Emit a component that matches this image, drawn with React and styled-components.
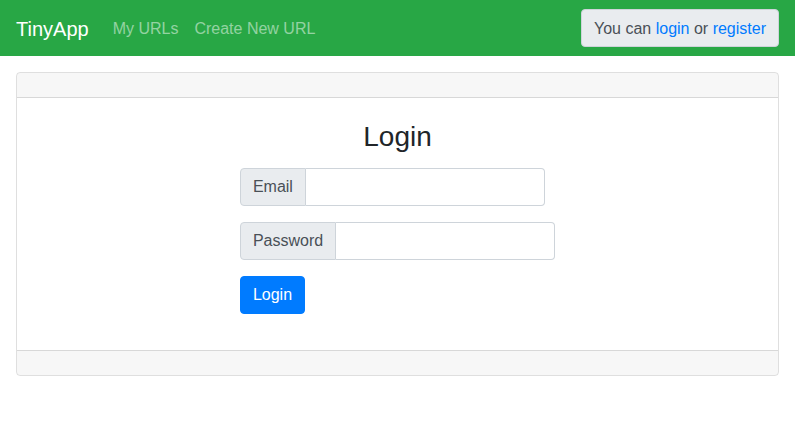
import styled, { createGlobalStyle } from "styled-components";
import React from "react";

const GlobalStyle = createGlobalStyle`
  * { box-sizing: border-box; }
  body {
    margin: 0;
    font-family: "Liberation Sans", Arial, sans-serif;
    font-size: 16px;
    line-height: 1.5;
    color: #212529;
    background: #fff;
  }
`;

const Navbar = styled.nav`
  height: 56px;
  background-color: #28a745;
  display: flex;
  align-items: center;
  justify-content: space-between;
  padding: 8px 16px;
`;

const NavLeft = styled.div`
  display: flex;
  align-items: center;
  padding-top: 2px;
`;

const Brand = styled.a`
  font-size: 20px;
  color: #fff;
  margin-right: 16px;
  text-decoration: none;
  line-height: 30px;
`;

const NavLink = styled.a`
  color: rgba(255, 255, 255, 0.5);
  padding: 8px;
  text-decoration: none;
`;

const UserBox = styled.div`
  background-color: #e9ecef;
  border: 1px solid #ced4da;
  border-radius: 4px;
  color: #495057;
  padding: 7px 12px 5px;
  height: 38px;
  line-height: 24px;
`;

const Link = styled.a`
  color: #007bff;
  text-decoration: none;
`;

const Main = styled.main`
  padding: 16px;
`;

const Card = styled.div`
  border: 1px solid rgba(0, 0, 0, 0.125);
  border-radius: 4px;
  overflow: hidden;
`;

const CardHeader = styled.div`
  height: 25px;
  background-color: rgba(0, 0, 0, 0.03);
  border-bottom: 1px solid rgba(0, 0, 0, 0.125);
`;

const CardFooter = styled.div`
  height: 25px;
  background-color: rgba(0, 0, 0, 0.03);
  border-top: 1px solid rgba(0, 0, 0, 0.125);
`;

const CardBody = styled.div`
  padding: 20px;
  text-align: center;
`;

const Title = styled.h3`
  font-size: 28px;
  font-weight: 500;
  line-height: 1.2;
  margin: 2px 0 14px;
`;

const Form = styled.form`
  display: inline-block;
  text-align: left;
`;

const FormGroup = styled.div`
  margin-bottom: 16px;
`;

const InputGroup = styled.div`
  display: flex;
  height: 38px;
`;

const Addon = styled.span`
  background-color: #e9ecef;
  border: 1px solid #ced4da;
  border-radius: 4px 0 0 4px;
  color: #495057;
  padding: 6px 12px;
  line-height: 24px;
`;

const Input = styled.input`
  width: ${(p) => p.$w}px;
  border: 1px solid #ced4da;
  border-left: none;
  border-radius: 0 4px 4px 0;
  font: inherit;
  padding: 6px 12px;
  outline: none;
`;

const Button = styled.button`
  background-color: #007bff;
  border: 1px solid #007bff;
  border-radius: 4px;
  color: #fff;
  font: inherit;
  line-height: 24px;
  padding: 6px 12px;
  height: 38px;
  cursor: pointer;
`;

export default function App() {
  return (
    <>
      <GlobalStyle />
      <Navbar>
        <NavLeft>
          <Brand href="#">TinyApp</Brand>
          <NavLink href="#">My URLs</NavLink>
          <NavLink href="#">Create New URL</NavLink>
        </NavLeft>
        <UserBox>
          You can <Link href="#">login</Link> or <Link href="#">register</Link>
        </UserBox>
      </Navbar>
      <Main>
        <Card>
          <CardHeader />
          <CardBody>
            <Title>Login</Title>
            <Form onSubmit={(e) => e.preventDefault()}>
              <FormGroup>
                <InputGroup>
                  <Addon>Email</Addon>
                  <Input type="email" $w={239} />
                </InputGroup>
              </FormGroup>
              <FormGroup>
                <InputGroup>
                  <Addon>Password</Addon>
                  <Input type="password" $w={219} />
                </InputGroup>
              </FormGroup>
              <FormGroup>
                <Button type="submit">Login</Button>
              </FormGroup>
            </Form>
          </CardBody>
          <CardFooter />
        </Card>
      </Main>
    </>
  );
}
